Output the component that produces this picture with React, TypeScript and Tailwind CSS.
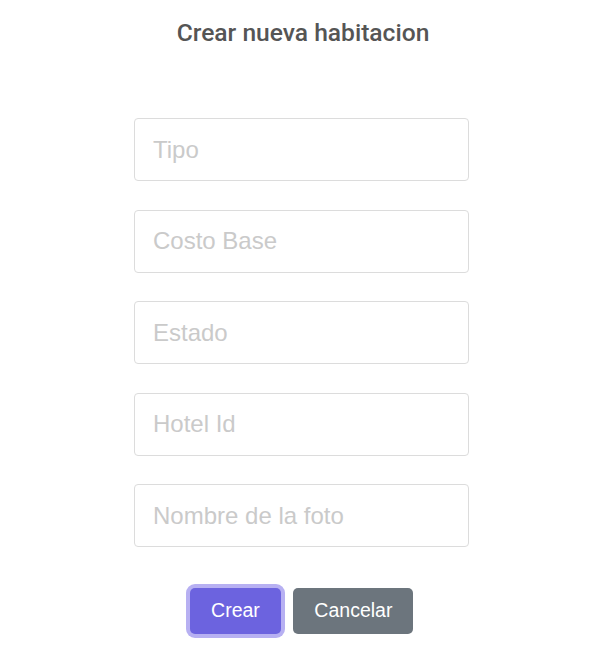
export default function App() {
  const fields = ["Tipo", "Costo Base", "Estado", "Hotel Id", "Nombre de la foto"];
  return (
    <div className="min-h-[659px] w-full bg-white flex flex-col items-center pt-[17px]">
      <h1
        className="text-[24.6px] font-medium text-[#555555] leading-[32px]"
        style={{ fontFamily: "Roboto, sans-serif" }}
      >
        Crear nueva habitacion
      </h1>
      <form
        className="mt-[69px] flex flex-col gap-[28.5px] w-[335px] mr-[3px]"
        style={{ fontFamily: "'Liberation Sans', Arial, sans-serif" }}
        onSubmit={(e) => e.preventDefault()}
      >
        {fields.map((f) => (
          <input
            key={f}
            placeholder={f}
            className="h-[63px] w-full rounded-[4px] border border-[#dcdcdc] px-[18px] text-[24px] text-[#333] placeholder:text-[#cacaca] outline-none"
          />
        ))}
        <div className="flex justify-center gap-[12px] mt-[12.5px]">
          <button
            type="submit"
            className="h-[46px] px-[21.5px] rounded-[5px] bg-[#6c63df] text-white text-[19.5px] ring-4 ring-[#b7b0f2]"
          >
            Crear
          </button>
          <button
            type="button"
            className="h-[46px] px-[21px] rounded-[5px] bg-[#6c757d] text-white text-[19.5px]"
          >
            Cancelar
          </button>
        </div>
      </form>
    </div>
  );
}
